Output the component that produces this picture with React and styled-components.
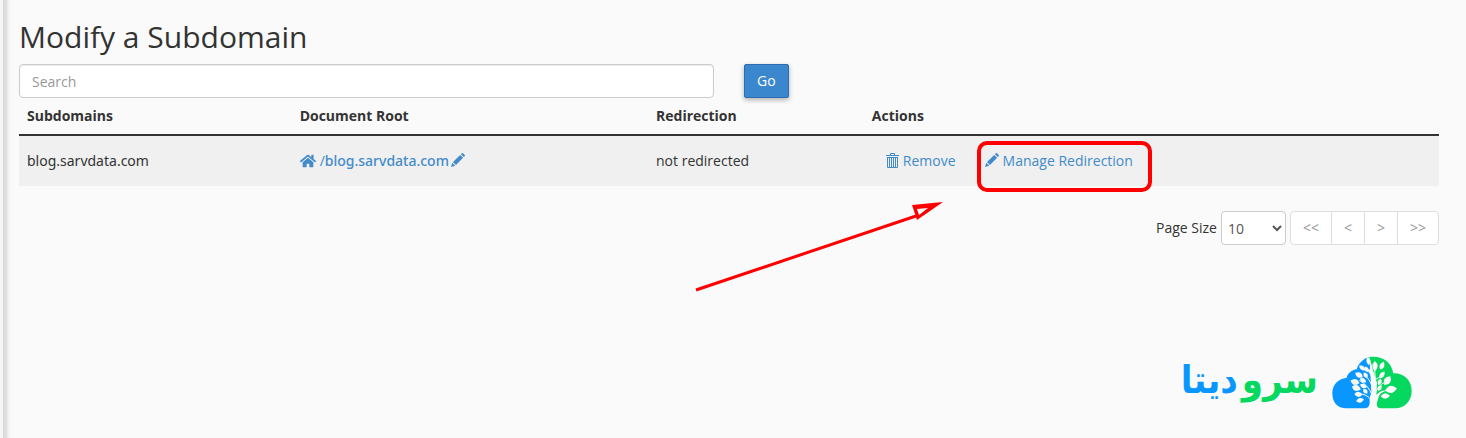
import React, { useState } from "react";
import styled, { createGlobalStyle } from "styled-components";
import { FaHome } from "react-icons/fa";

const subdomains = [
  {
    name: "blog.sarvdata.com",
    root: "blog.sarvdata.com",
    redirection: "not redirected",
  },
];

const pagerButtons = [
  { text: "<<", label: "First page" },
  { text: "<", label: "Previous page" },
  { text: ">", label: "Next page" },
  { text: ">>", label: "Last page" },
];

// x, y, rx, ry, rotation
const leaves = [
  [131, 49, 6, 13, -8],
  [113, 70, 6, 12, -55],
  [126, 74, 6, 10, -30],
  [103, 91, 8, 13, -60],
  [123, 92, 6, 10, -35],
  [91, 112, 9, 14, -75],
  [115, 107, 6, 11, -60],
  [95, 130, 9, 14, -70],
  [116, 124, 6, 11, -65],
  [101, 149, 8, 12, -85],
  [122, 140, 6, 9, -45],
  [106, 167, 7, 12, 75],
  [151, 64, 8, 15, 0],
  [172, 63, 7, 13, 25],
  [172, 91, 7, 13, 35],
  [188, 108, 10, 16, 35],
  [165, 112, 6, 10, 20],
  [199, 134, 11, 18, 80],
  [165, 130, 6, 10, 35],
  [182, 154, 8, 14, 88],
];

const TrashIcon = () => (
  <svg width="13" height="16" viewBox="0 0 13 16" fill="none" stroke="currentColor" aria-hidden="true">
    <path d="M0 2.5h13M4.5 2.5v-2h4v2M1 4.5h11M1.5 4v10.5h10V4M3.5 5v9M5.5 5v9M7.5 5v9M9.5 5v9" />
  </svg>
);

const PencilIcon = () => (
  <svg width="14" height="16" viewBox="0 0 14 16" fill="currentColor" aria-hidden="true">
    <path d="M0 14l1.3-4.3 3 3zM2 9l7.2-7.1 2.9 2.9L5 12zM9.9 1.2l.9-.9q.6-.6 1.2 0l1.7 1.7q.6.6 0 1.2l-.9.9z" />
  </svg>
);

const CloudTree = () => (
  <svg width="80" height="53" viewBox="22 34 240 159" aria-hidden="true">
    <path
      fill="#0a96ff"
      d="M62 191C36 190 23 170 23 146c0-25 17-44 42-46 5-15 16-24 31-26 5-17 18-32 38-37l3 45 3 60-5 20v14q-1 15-16 15z"
    />
    <path
      fill="#05d85f"
      d="M134 37c32-5 66 10 72 49 31-1 55 20 55 52 0 30-20 53-50 53h-43q-12-1-12-13l4-15c2-12 10-19 18-26-10 2-16 7-23 14l2-36-8-25z"
    />
    <g fill="none" stroke="#fafafa" strokeLinecap="round">
      <path strokeWidth="8" d="M134 78q12 15 12 36v76" />
      <path strokeWidth="18" d="M147 156v50" />
      <path strokeWidth="3" d="M105 108q25 12 37 42M105 148q20-2 37 20M120 92q18 14 23 36M150 75l2 30q10-4 18-14M152 146q8-25 30-34M154 158q12-18 36-22" />
    </g>
    <g fill="#fafafa">
      {leaves.map(([x, y, rx, ry, rotation]) => (
        <path
          key={`${x}-${y}`}
          transform={`translate(${x} ${y}) rotate(${rotation})`}
          d={`M0 ${-ry}Q${rx * 2} 0 0 ${ry}Q${-rx * 2} 0 0 ${-ry}z`}
        />
      ))}
    </g>
  </svg>
);

const App = () => {
  const [pageSize, setPageSize] = useState("10");

  return (
    <Page>
      <GlobalStyle />
      <Title>Modify a Subdomain</Title>

      <SearchForm onSubmit={(e) => e.preventDefault()}>
        <SearchInput type="text" placeholder="Search" aria-label="Search" />
        <GoButton type="submit">Go</GoButton>
      </SearchForm>

      <Table>
        <thead>
          <tr>
            <HeadCell $width="19.2%">Subdomains</HeadCell>
            <HeadCell $width="25.1%">Document Root</HeadCell>
            <HeadCell $width="15.2%">Redirection</HeadCell>
            <HeadCell>Actions</HeadCell>
          </tr>
        </thead>
        <tbody>
          {subdomains.map((item) => (
            <Row key={item.name}>
              <Cell>
                <Domain>{item.name}</Domain>
              </Cell>
              <Cell>
                <RootPath>
                  <RootLink href="#root">
                    <FaHome size={16} />
                    <span>
                      /<Domain $weight={500}>{item.root}</Domain>
                    </span>
                  </RootLink>
                  <RootLink href="#edit" aria-label="Edit document root">
                    <PencilIcon />
                  </RootLink>
                </RootPath>
              </Cell>
              <Cell>{item.redirection}</Cell>
              <Cell>
                <Actions>
                  <ActionLink href="#remove">
                    <TrashIcon />
                    Remove
                  </ActionLink>
                  <ActionLink href="#redirection">
                    <PencilIcon />
                    Manage Redirection
                    <Highlight />
                  </ActionLink>
                  <Arrow width="250" height="92" viewBox="0 0 250 92" aria-hidden="true">
                    <path d="M2 89L222 15" fill="none" stroke="#f00" strokeWidth="3" />
                    <path d="M218 4L249 1L223 19z" fill="#f00" />
                    <path d="M223 8L234 7L225 14z" fill="#fafafa" />
                  </Arrow>
                </Actions>
              </Cell>
            </Row>
          ))}
        </tbody>
      </Table>

      <Pager>
        <label htmlFor="page-size">Page Size</label>
        <PageSize id="page-size" value={pageSize} onChange={(e) => setPageSize(e.target.value)}>
          <option>10</option>
          <option>20</option>
          <option>50</option>
          <option>100</option>
        </PageSize>
        <ButtonGroup>
          {pagerButtons.map((button) => (
            <PagerButton key={button.text} type="button" aria-label={button.label}>
              {button.text}
            </PagerButton>
          ))}
        </ButtonGroup>
      </Pager>

      <Brand>
        <BrandName lang="fa" dir="rtl">
          <BrandWord $color="#05d85f">سرو</BrandWord>
          <BrandWord $color="#0a96ff">دیتا</BrandWord>
        </BrandName>
        <CloudTree />
      </Brand>
    </Page>
  );
};

export default App;

const GlobalStyle = createGlobalStyle`
  * {
    box-sizing: border-box;
  }

  body {
    margin: 0;
    background: #f5f5f5;
    color: #333;
    font-family: "Open Sans", sans-serif;
    font-size: 14px;
    line-height: 20px;
  }

  input, select, button {
    font: inherit;
  }
`;

const Page = styled.main`
  min-height: 100vh;
  margin-left: 3px;
  padding: 20px 27px 24px 16px;
  background: linear-gradient(to right, #d8d8d8, #e0e0e0 3px, #f4f4f4 6px, #fafafa 9px);
`;

const Title = styled.h1`
  margin: 0 0 10px;
  font-size: 30px;
  font-weight: 400;
  line-height: 34px;
`;

const SearchForm = styled.form`
  display: flex;
  gap: 30px;
`;

const SearchInput = styled.input`
  width: calc(50% - 15px);
  height: 34px;
  padding: 6px 12px;
  border: 1px solid #ccc;
  border-radius: 4px;
  background: #fff;
  box-shadow: inset 0 1px 1px rgba(0, 0, 0, 0.08);
  color: #555;

  &::placeholder {
    color: #999;
  }
`;

const GoButton = styled.button`
  padding: 6px 12px;
  border: 1px solid #2d6cae;
  border-radius: 2px;
  background: #3a87cd;
  box-shadow: 0 2px 5px rgba(0, 0, 0, 0.3);
  color: #fff;
  cursor: pointer;
`;

const Table = styled.table`
  width: 100%;
  border-collapse: separate;
  border-spacing: 0;
  table-layout: fixed;
`;

const HeadCell = styled.th`
  width: ${(props) => props.$width || "auto"};
  padding: 8px;
  border-bottom: 2px solid #333;
  font-weight: 700;
  text-align: left;
`;

const Row = styled.tr`
  background: #f0f0f0;
`;

const Cell = styled.td`
  padding: 15px 8px;
`;

const Domain = styled.span`
  font-family: "Noto Sans", sans-serif;
  font-weight: ${(props) => props.$weight || 400};
`;

const RootPath = styled.div`
  display: flex;
  align-items: center;
  gap: 2px;
`;

const RootLink = styled.a`
  display: flex;
  align-items: center;
  gap: 4px;
  color: #428bca;
  text-decoration: none;
`;

const Actions = styled.div`
  position: relative;
  display: flex;
  gap: 29px;
  padding-left: 14px;
`;

const ActionLink = styled.a`
  position: relative;
  display: flex;
  align-items: center;
  gap: 4px;
  color: #428bca;
  text-decoration: none;
`;

const Highlight = styled.span`
  position: absolute;
  inset: -10px -19px -21px -8px;
  border: 4px solid #f00;
  border-radius: 10px;
  pointer-events: none;
`;

const Arrow = styled.svg`
  position: absolute;
  top: 50px;
  left: -178px;
  pointer-events: none;
`;

const Pager = styled.div`
  display: flex;
  align-items: center;
  justify-content: flex-end;
  gap: 4px;
  margin-top: 25px;
`;

const PageSize = styled.select`
  width: 65px;
  height: 34px;
  padding: 0 2px;
  border: 1px solid #ccc;
  border-radius: 4px;
  background: #fff;
  color: #555;
`;

const ButtonGroup = styled.div`
  display: flex;
`;

const PagerButton = styled.button`
  height: 34px;
  padding: 6px 12px;
  border: 1px solid #ddd;
  background: #fff;
  color: #999;

  & + & {
    margin-left: -1px;
  }

  &:first-child {
    border-radius: 4px 0 0 4px;
  }

  &:last-child {
    border-radius: 0 4px 4px 0;
  }
`;

const Brand = styled.footer`
  display: flex;
  align-items: flex-start;
  justify-content: flex-end;
  gap: 14px;
  margin-top: 111px;
  padding-right: 27px;
`;

const BrandName = styled.div`
  display: flex;
  gap: 4px;
  font-family: "DejaVu Sans Condensed", "DejaVu Sans", sans-serif;
  font-size: 38px;
  font-weight: 700;
  line-height: 48px;
`;

const BrandWord = styled.span`
  color: ${(props) => props.$color};
`;
